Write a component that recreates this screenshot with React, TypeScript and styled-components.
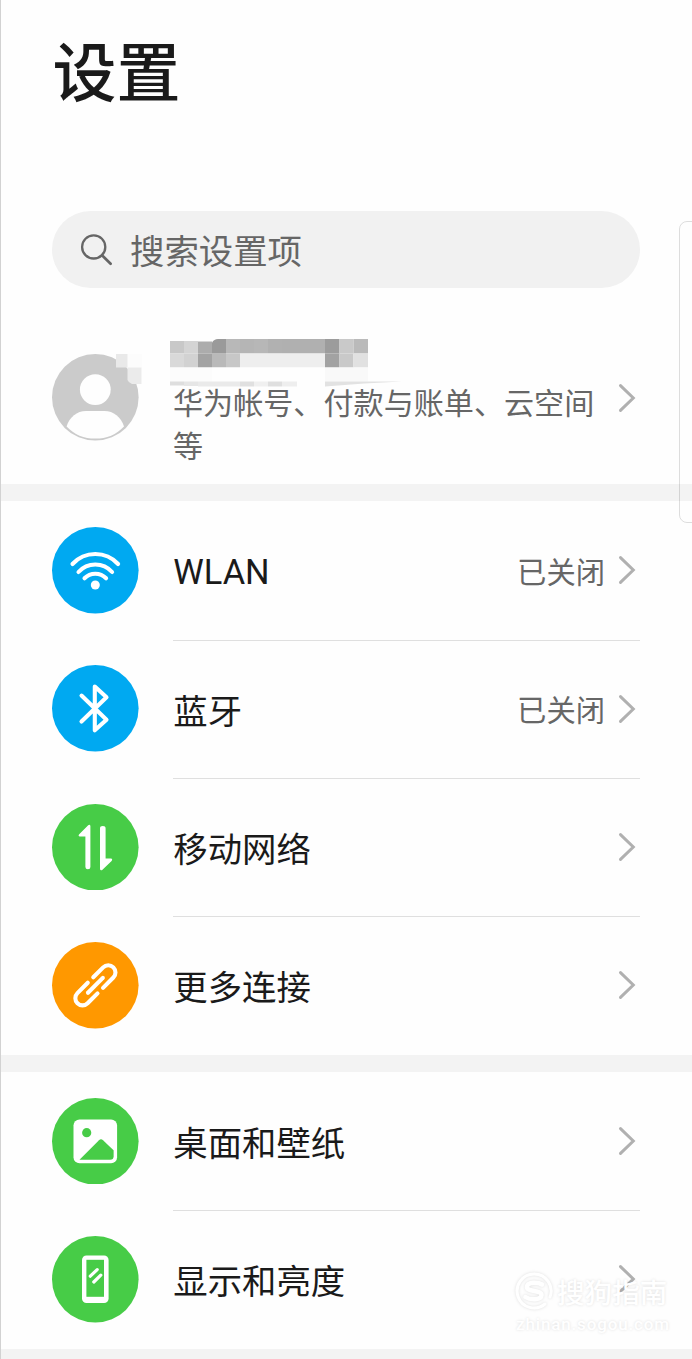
import React from "react";
import styled, { createGlobalStyle } from "styled-components";

const GlobalStyle = createGlobalStyle`
  html, body { margin: 0; padding: 0; background: #fefefe; }
  * { box-sizing: border-box; }
`;

const Screen = styled.main`
  position: relative;
  width: 692px;
  height: 1359px;
  overflow: hidden;
  display: flex;
  flex-direction: column;
  background: #fefefe;
  color: #1a1a1a;
  font-family: Roboto, "Noto Sans CJK SC", sans-serif;
  border-left: 1px solid #d2d2d2;
`;

const Title = styled.h1`
  margin: 0;
  padding: 28px 0 0 51.5px;
  height: 210.5px;
  flex: none;
  font-size: 64px;
  line-height: 94px;
  font-weight: 500;
`;

const SearchBar = styled.div`
  flex: none;
  display: flex;
  align-items: center;
  margin: 0 52px 0 51px;
  height: 77.5px;
  padding-left: 26.5px;
  border-radius: 39px;
  background: #f1f1f1;
  color: #666;
  font-size: 34.4px;
  line-height: 50px;
`;

const SearchText = styled.span`
  margin-left: 15.5px;
  padding-top: 6px;
`;

const Account = styled.section`
  flex: none;
  display: flex;
  height: 196px;
  padding: 51px 52px 0 51px;
  align-items: flex-start;
`;

const AvatarSlot = styled.div`
  flex: none;
  width: 92px;
  height: 87px;
  margin-top: 14.5px;
`;

const AccountBody = styled.div`
  width: 430px;
  margin-left: 26px;
  display: flex;
  flex-direction: column;
`;

const AccountText = styled.p`
  margin: -7px 0 0 3px;
  color: #666;
  font-size: 30.1px;
  line-height: 43.4px;
`;

const AccountChevron = styled.div`
  display: flex;
  margin: 42.5px 0 0 auto;
`;

const Band = styled.div`
  flex: none;
  height: 17.3px;
  background: #f3f3f3;
`;

const Group = styled.section`
  flex: none;
  display: flex;
  flex-direction: column;
  padding: 0 52px 0 51px;
`;

const Row = styled.div`
  display: flex;
  height: 138.33px;
`;

const RowIcon = styled.div`
  flex: none;
  width: 121.3px;
  display: flex;
  align-items: center;
`;

const RowBody = styled.div<{ $divided: boolean }>`
  flex: 1;
  display: flex;
  align-items: center;
  margin-bottom: -1px;
  border-bottom: 1px solid ${(p) => (p.$divided ? "#dfdfdf" : "transparent")};
`;

const Label = styled.span<{ $latin: boolean }>`
  flex: 1;
  padding-top: ${(p) => (p.$latin ? 4 : 6)}px;
  font-size: 34.4px;
  line-height: 50px;
`;

const Status = styled.span`
  margin-right: 13px;
  padding-top: 5px;
  color: #666;
  font-size: 29.3px;
  line-height: 44px;
`;

const SidePanel = styled.div`
  position: absolute;
  left: 678px;
  top: 221px;
  width: 30px;
  height: 302px;
  border: 1.5px solid rgba(0, 0, 0, 0.13);
  border-radius: 8px;
`;

const Watermark = styled.div`
  position: absolute;
  left: 513px;
  top: 1271px;
  width: 160px;
  color: #fff;
  text-shadow: 0 0 3px rgba(0, 0, 0, 0.13);
`;

const WatermarkBrand = styled.div`
  display: flex;
  align-items: center;
  gap: 3px;
  height: 40px;
  font-size: 27.6px;
  font-weight: 500;
  white-space: nowrap;
  svg { flex: none; filter: drop-shadow(0 0 1.5px rgba(0, 0, 0, 0.13)); }
`;

const WatermarkUrl = styled.div`
  font-size: 17px;
  line-height: 20px;
  margin-top: 3px;
  margin-left: 2px;
  font-weight: 500;
  letter-spacing: 0.85px;
  white-space: nowrap;
`;

const Chevron = () => (
  <svg width="22" height="32" viewBox="0 0 22 32" fill="none" stroke="#b0b0b0" strokeWidth="3" strokeLinecap="round" strokeLinejoin="miter">
    <path d="M2.5 3.6 L15.3 16 L2.5 28.4" />
  </svg>
);

const SearchIcon = () => (
  <svg width="36" height="36" viewBox="0 0 36 36" fill="none" stroke="#666" strokeWidth="2.3" strokeLinecap="round">
    <circle cx="14.7" cy="15.9" r="11.6" />
    <path d="M23 24.3 L31.6 32.8" strokeWidth="2.7" />
  </svg>
);

const Avatar = () => (
  <svg width="92" height="87" viewBox="0 0 92 87">
    <circle cx="43.3" cy="43.3" r="43.3" fill="#cbcbcb" />
    <circle cx="43.3" cy="35.6" r="15.4" fill="#fefefe" />
    <path d="M14.6 72.4 C17.5 63 25 57 34 57 H52.5 C61.5 57 69 63 72 72.4 C64.5 80.5 54.5 84.6 43.3 84.6 S22 80.5 14.6 72.4 Z" fill="#fefefe" />
    <path d="M75.5 0 H90 V13.5 H75.5 Z" fill="#fcfcfc" />
    <path d="M64 0 H75.5 V13.5 H64 Z" fill="#e9e9e9" />
    <path d="M75.5 13.5 H89.5 V30 H80 Q76 28 75.5 26 Z" fill="#ebebeb" />
  </svg>
);

type Cell = [number, number, number, number, string];
const cells: Cell[] = [
  [0, 2, 14, 12.5, "#c8c8c8"], [14, 2, 14, 12.5, "#d4d4d4"], [28, 2.5, 14, 12, "#acacac"],
  [56, 0, 14, 14.5, "#b8b8b8"], [70, 0, 14, 14.5, "#b5b5b5"], [84, 0, 14, 14.5, "#b7b7b7"],
  [98, 0, 14, 14.5, "#b1b1b1"], [112, 0, 43, 14.5, "#b0b0b0"], [155, 0, 14.5, 14.5, "#9c9c9c"],
  [169.5, 0, 14, 14.5, "#c9c9c9"], [183.5, 0, 14.5, 14.5, "#bababa"],
  [0, 14.5, 14, 14, "#d9d9d9"], [14, 14.5, 14, 14, "#d2d2d2"], [28, 14.5, 14, 14, "#a3a3a3"],
  [42, 14.5, 14, 14, "#b9b9b9"], [56, 14.5, 14, 14, "#c7c7c7"], [70, 14.5, 85, 14, "#eeeeee"],
  [155, 14.5, 14.5, 14, "#a2a2a2"], [169.5, 14.5, 14, 14, "#c9c9c9"], [183.5, 14.5, 14.5, 14, "#e1e1e1"],
  [0, 28.5, 42, 14, "#fcfcfc"], [42, 28.5, 113, 14, "#fefefe"], [155, 28.5, 43, 14, "#f9f9f9"],
  [0, 42.5, 14, 4, "#dedede"], [14, 42.5, 14, 4.5, "#e6e6e6"], [28, 42.5, 42, 5, "#eaeaea"],
  [70, 42.5, 14, 5, "#e0e0e0"], [84, 42.5, 14, 5, "#f0f0f0"], [98, 42.5, 14, 5, "#dfdfdf"], [112, 42.5, 15, 5, "#eeeeee"],
];

const MaskedName = () => (
  <svg width="240" height="50" viewBox="0 0 240 50">
    {cells.map(([x, y, w, h, fill], i) => (
      <rect key={i} x={x} y={y} width={w} height={h} fill={fill} />
    ))}
    <path d="M42 3.5 Q44 0 48 0 H56 V14.5 H42 Z" fill="#9a9a9a" />
    <path d="M155 42.5 H232 Q195 44 155 47.5 Z" fill="#e2e2e2" />
  </svg>
);

const Badge = ({ color, children }: { color: string; children: React.ReactNode }) => (
  <svg width="86.6" height="86.6" viewBox="0 0 86.6 86.6" fill="none" strokeLinecap="round" strokeLinejoin="round">
    <circle cx="43.3" cy="43.3" r="43.3" fill={color} />
    {children}
  </svg>
);

const BLUE = "#00a9f1";
const GREEN = "#47cc47";
const ORANGE = "#ff9800";

const Wifi = () => (
  <Badge color={BLUE}>
    <g stroke="#fff" strokeWidth="4.1">
      <path d="M20.5 37 A31 31 0 0 1 66.1 37" />
      <path d="M26.5 45 A22.5 22.5 0 0 1 60.1 45" />
      <path d="M32.5 51.3 A15 15 0 0 1 54.1 51.3" />
    </g>
    <circle cx="43.3" cy="58" r="4.5" fill="#fff" />
  </Badge>
);

const Bluetooth = () => (
  <Badge color={BLUE}>
    <path d="M29.5 30.6 L54.5 54.8 L42.8 65.3 V21.6 L54.5 32.3 L29.5 56.5" stroke="#fff" strokeWidth="4.1" />
  </Badge>
);

const MobileData = () => (
  <Badge color={GREEN}>
    <path d="M38.4 22 V63 Q38.4 65.3 35.9 65.3 T33.4 63 V32.6 H27.8 Q25.8 32 27.2 30.3 L36.2 21.2 Q38 20 38.4 22 Z" fill="#fff" />
    <path d="M48 65 V24.4 Q48 22.1 50.8 22.1 T53.6 24.4 V54.6 H59 Q61 55 59.6 56.9 L50.2 65.9 Q48.4 67 48 65 Z" fill="#fff" />
  </Badge>
);

const Link = () => (
  <Badge color={ORANGE}>
    <g transform="translate(43.4 43.3) rotate(-45)" stroke="#fff" strokeWidth="4.1">
      <path d="M4.2 -7.2 H18.2 A7.2 7.2 0 0 1 18.2 7.2 H3.6" />
      <path d="M-4.2 7.2 H-18.2 A7.2 7.2 0 0 1 -18.2 -7.2 H-3.6" />
      <path d="M-10.5 0 H10.5" />
    </g>
  </Badge>
);

const Picture = () => (
  <Badge color={GREEN}>
    <rect x="21.5" y="21.5" width="43.6" height="43.8" rx="6" fill="#fff" />
    <circle cx="34.7" cy="34.7" r="4.6" fill={GREEN} />
    <path d="M27.5 61.8 L47 42.2 Q49 40.4 51 42.2 L61.6 52.3 V58.3 Q61.6 61.8 58.1 61.8 Z" fill={GREEN} />
  </Badge>
);

const Phone = () => (
  <Badge color={GREEN}>
    <rect x="30" y="19.4" width="26.6" height="47.6" rx="4.5" fill="#fff" />
    <rect x="34.4" y="23.8" width="17.6" height="37" fill={GREEN} />
    <path d="M38.3 40.2 L45.2 33.6 M41.8 46 L48.8 39.2" stroke="#fff" strokeWidth="3.2" />
  </Badge>
);

interface Item {
  label: string;
  icon: React.ReactNode;
  status?: string;
  latin?: boolean;
}

const network: Item[] = [
  { label: "WLAN", icon: <Wifi />, status: "已关闭", latin: true },
  { label: "蓝牙", icon: <Bluetooth />, status: "已关闭" },
  { label: "移动网络", icon: <MobileData /> },
  { label: "更多连接", icon: <Link /> },
];

const display: Item[] = [
  { label: "桌面和壁纸", icon: <Picture /> },
  { label: "显示和亮度", icon: <Phone /> },
];

const SettingsGroup = ({ items }: { items: Item[] }) => (
  <Group>
    {items.map((item, i) => (
      <Row key={item.label}>
        <RowIcon>{item.icon}</RowIcon>
        <RowBody $divided={i < items.length - 1}>
          <Label $latin={!!item.latin}>{item.label}</Label>
          {item.status && <Status>{item.status}</Status>}
          <Chevron />
        </RowBody>
      </Row>
    ))}
  </Group>
);

export default function App() {
  return (
    <>
      <GlobalStyle />
      <Screen lang="zh-CN">
        <Title>设置</Title>
        <SearchBar>
          <SearchIcon />
          <SearchText>搜索设置项</SearchText>
        </SearchBar>
        <Account>
          <AvatarSlot><Avatar /></AvatarSlot>
          <AccountBody>
            <MaskedName />
            <AccountText>华为帐号、付款与账单、云空间等</AccountText>
          </AccountBody>
          <AccountChevron><Chevron /></AccountChevron>
        </Account>
        <Band />
        <SettingsGroup items={network} />
        <Band />
        <SettingsGroup items={display} />
        <Band />
        <SidePanel />
        <Watermark>
          <WatermarkBrand>
            <svg width="40" height="40" viewBox="0 0 40 40" fill="none" stroke="#fff" strokeLinecap="round">
              <path d="M31 33 A17 17 0 1 1 36 26" strokeWidth="3" />
              <path d="M28 13.5 C24 11 13 10.5 13 16 C13 21.5 27.5 18.5 27.5 24 C27.5 29.5 16 29 11.5 26" strokeWidth="4.5" />
            </svg>
            搜狗指南
          </WatermarkBrand>
          <WatermarkUrl>zhinan.sogou.com</WatermarkUrl>
        </Watermark>
      </Screen>
    </>
  );
}
